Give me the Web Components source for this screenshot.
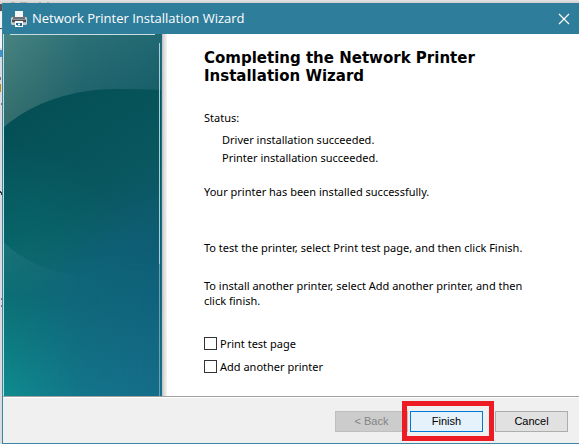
<!DOCTYPE html>
<html lang="en">
<head>
<meta charset="utf-8">
<title>Network Printer Installation Wizard</title>
<style>
html, body { height: 100%; }
body { margin: 0; font: 11px/15px "Noto Sans", "Open Sans", sans-serif; color: #000; background: #dcdcdc; overflow: hidden; }
</style>
</head>
<body>
<desktop-backdrop>
  <wizard-window>
    <window-title slot="title">Network Printer Installation Wizard</window-title>
    <wizard-banner slot="banner"></wizard-banner>
    <wizard-page></wizard-page>
    <wizard-actions slot="footer"></wizard-actions>
  </wizard-window>
</desktop-backdrop>
<script>
function define(name, html) {
  const template = document.createElement('template');
  template.innerHTML = html;
  customElements.define(name, class extends HTMLElement {
    constructor() {
      super();
      this.attachShadow({ mode: 'open' }).append(template.content.cloneNode(true));
    }
    connectedCallback() {
      const control = this.shadowRoot.querySelector('button');
      if (control) control.disabled = this.hasAttribute('disabled');
    }
  });
}

define('desktop-backdrop', `
<style>
:host { display: flex; position: relative; height: 100%; box-sizing: border-box; padding: 3px 0 0 2px; background: linear-gradient(#e4e4e4, #cfcfcf 3px, #dadcde 4px); }
svg { position: absolute; left: 0; top: 0; }
::slotted(*) { flex: 1; min-width: 0; position: relative; }
</style>
<svg width="60" height="320" aria-hidden="true" shape-rendering="crispEdges">
  <path fill="#b9aca6" d="M11 2h4v1h-4zM20 2h7v1h-7zM39 2h2v1h-2zM47 2h2v1h-2z"/>
  <path fill="#555" d="M0 4h2v7H0zM0 28h2v1H0z"/>
  <path fill="#f3f4f5" d="M0 12h2v16H0zM0 30h2v18H0z"/>
  <path fill="#3f96cf" d="M0 50h2v7H0z"/>
  <path fill="#777" d="M0 77h1v3H0zM1 103h1v2H1zM1 298h1v2H1zM1 305h1v2H1z"/>
  <path fill="#b98a22" d="M0 84h1v8H0z"/>
  <path fill="#333" d="M0 191h1v2H0zM1 192h1v3H1z"/>
</svg>
<slot></slot>`);

define('wizard-window', `
<style>
:host { display: grid; grid-template: auto minmax(0, 1fr) auto / 164px 1fr; box-sizing: border-box; border: solid #3a87a5; border-width: 0 0 1px 1px; background: #fff; }
slot[name=title]::slotted(*), slot[name=footer]::slotted(*) { grid-column: 1 / -1; }
</style>
<slot name="title"></slot><slot name="banner"></slot><slot></slot><slot name="footer"></slot>`);

define('window-title', `
<style>
:host { display: flex; align-items: center; height: 31px; box-sizing: border-box; padding: 0 8px; gap: 5px; background: #2e7d9b; color: #fff; }
h1 { margin: 0; flex: 1; font: 13px/15px "Open Sans", sans-serif; }
.close { display: flex; align-items: center; justify-content: center; width: 14px; height: 24px; padding: 0; border: 0; background: none; color: inherit; }
svg { display: block; }
</style>
<svg width="16" height="16" viewBox="0 0 16 16" aria-hidden="true">
  <path fill="#f4f6f7" d="M4 0h8v6H4z"/>
  <path fill="#c9cdd0" d="M1 6h14l1 1v6l-1 1H1l-1-1V7z"/>
  <path fill="#6d7175" d="M2 5h2v1h8V5h2v3H2z"/>
  <path fill="#8e9296" d="M1 8h14v1H1z"/>
  <path fill="#4c5054" d="M1 9h14v2H1z"/>
  <path fill="#a3a7aa" d="M1 11h3v1H1zM12 11h3v1h-3z"/>
  <path fill="#fafafa" d="M4 10h8v6H4z"/>
  <path fill="#2b5f97" d="M5 12h2v2H5zM9 12h2v3H9z"/>
  <path fill="#62b1c6" d="M7 12h2v1H7zM6 14h3v1H6z"/>
</svg>
<h1><slot></slot></h1>
<button class="close" aria-label="Close"><svg width="12" height="12" viewBox="0 0 12 12"><path d="M1 1l10 10M11 1L1 11" fill="none" stroke="currentColor" stroke-width="1.2"/></svg></button>`);

define('wizard-banner', `
<style>
:host { display: flex; min-height: 0; }
svg { flex: 1; width: 0; height: 100%; border-left: 1px solid #c4dce2; box-sizing: border-box; }
.shade { width: 5px; background: linear-gradient(90deg, #b9bbbc, #d9d9d9 35%, #f4f4f4); }
</style>
<svg viewBox="0 0 158 362" preserveAspectRatio="none" aria-hidden="true">
  <defs>
    <linearGradient id="base" x2="0" y2="1"><stop offset="0" stop-color="#488481"/><stop offset=".22" stop-color="#37706f"/><stop offset=".6" stop-color="#187276"/><stop offset=".72" stop-color="#0c6f74"/><stop offset="1" stop-color="#0f8c8e"/></linearGradient>
    <linearGradient id="rightside" x2="0" y2="1"><stop offset="0" stop-color="#216872"/><stop offset=".2" stop-color="#155c68"/><stop offset=".6" stop-color="#0e5e76"/><stop offset="1" stop-color="#156c89"/></linearGradient>
    <linearGradient id="across"><stop offset="0" stop-color="#000"/><stop offset=".5" stop-color="#bbb"/><stop offset="1" stop-color="#fff"/></linearGradient>
    <mask id="toRight"><path fill="url(#across)" d="M0 0h158v362H0z"/></mask>
    <linearGradient id="disc" gradientUnits="userSpaceOnUse" x1="40" y1="70" x2="140" y2="230"><stop offset="0" stop-color="#045056"/><stop offset=".55" stop-color="#09575f"/><stop offset="1" stop-color="#0d5c76"/></linearGradient>
    <radialGradient id="leftGlow" gradientUnits="userSpaceOnUse" cx="10" cy="225" r="115"><stop stop-color="#06686a" stop-opacity=".9"/><stop offset="1" stop-color="#06686a" stop-opacity="0"/></radialGradient>
    <linearGradient id="blend" gradientUnits="userSpaceOnUse" x1="20" y1="170" x2="70" y2="250"><stop offset=".25" stop-color="#fff"/><stop offset="1" stop-color="#000"/></linearGradient>
    <mask id="melt"><path fill="url(#blend)" d="M0 50h158v260H0z"/><path fill="url(#upper)" d="M0 50h158v260H0z"/></mask>
    <linearGradient id="upper" gradientUnits="userSpaceOnUse" x1="0" y1="100" x2="0" y2="236"><stop offset=".2" stop-color="#fff"/><stop offset="1" stop-color="#fff" stop-opacity="0"/></linearGradient>
  </defs>
  <path fill="url(#base)" d="M0 0h158v362H0z"/>
  <path fill="url(#rightside)" mask="url(#toRight)" d="M0 0h158v362H0z"/>
  <g mask="url(#melt)">
    <path fill="url(#disc)" d="M0 93C30 67 72 55 112 55q24 0 46 1V242H75C45 238 18 226 0 208z"/>
    <path fill="url(#leftGlow)" d="M0 93h158V242H75C45 238 18 226 0 208z"/>
  </g>
  <path fill="#c8dddd" d="M6 0h145v1H6z"/>
  <path stroke="#a9ced6" d="M155.500 9V230" fill="none"/>
  <path stroke="#6d9fb2" d="M155.500 230V362" fill="none"/>
  <path stroke="#1b7287" d="M157.500 8V362" fill="none"/>
</svg><div class="shade"></div>`);

define('status-line', `
<style>:host { display: block; line-height: 18px; padding-left: 18px; }</style><slot></slot>`);

define('check-option', `
<style>
:host { display: block; }
label { display: flex; align-items: center; gap: 3px; }
input { appearance: none; box-sizing: border-box; width: 13px; height: 13px; margin: 0; border: 1px solid #333; background: #fff; }
input:checked { background: #333; box-shadow: inset 0 0 0 2px #fff; }
</style>
<label><input type="checkbox"><span><slot></slot></span></label>`);

define('wizard-page', `
<style>
:host { display: block; padding: 15px 40px 22px 37px; }
h2 { margin: 0 0 25px; font: bold 15px/18px "DejaVu Sans", sans-serif; }
p { margin: 0; }
.status { margin: 6px 0 17px; }
.done { margin-bottom: 41px; }
.test { margin-bottom: 23px; }
.options { display: grid; gap: 8px; margin-top: 28px; }
</style>
<h2>Completing the Network Printer<br>Installation Wizard</h2>
<p>Status:</p>
<div class="status"><status-line>Driver installation succeeded.</status-line><status-line>Printer installation succeeded.</status-line></div>
<p class="done">Your printer has been installed successfully.</p>
<p class="test">To test the printer, select Print test page, and then click Finish.</p>
<p>To install another printer, select Add another printer, and then<br>click finish.</p>
<div class="options"><check-option>Print test page</check-option><check-option>Add another printer</check-option></div>`);

define('push-button', `
<style>
:host { display: block; position: relative; }
button { display: block; box-sizing: border-box; width: 73px; height: 21px; padding: 0; border: 1px solid #adadad; background: #e1e1e1; color: #000; font: 11px/15px "Liberation Sans", sans-serif; }
button:disabled { border-color: #bfbfbf; background: #ccc; color: #838383; }
:host([primary]) button { border-color: #0078d7; background: #e5f1fb; }
:host([primary])::after { content: ""; position: absolute; inset: -10px -11px -9px -8px; border: 5px solid #ed1c24; pointer-events: none; }
</style>
<button type="button"><slot></slot></button>`);

define('wizard-actions', `
<style>
:host { display: flex; justify-content: flex-end; gap: 12px; padding: 14px 11px 11px; border-top: 1px solid #a0a0a0; background: #f0f0f0; box-shadow: inset 0 1px #fff; }
.steps { display: flex; gap: 2px; }
</style>
<div class="steps"><push-button disabled>&lt; Back</push-button><push-button primary>Finish</push-button></div>
<push-button>Cancel</push-button>`);
</script>
</body>
</html>
